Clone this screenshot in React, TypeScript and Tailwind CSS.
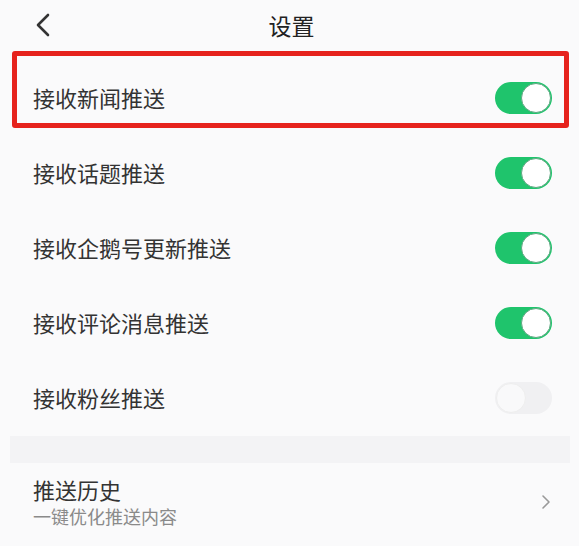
import React, { useState } from 'react';

const ITEMS = [
  { label: '接收新闻推送', on: true, highlight: true },
  { label: '接收话题推送', on: true },
  { label: '接收企鹅号更新推送', on: true },
  { label: '接收评论消息推送', on: true },
  { label: '接收粉丝推送', on: false },
];

function Toggle({ on, onClick }: { on: boolean; onClick: () => void }) {
  return (
    <button
      type="button"
      onClick={onClick}
      className={`relative w-[57px] h-[32px] rounded-full shrink-0 ${
        on ? 'bg-[#1fc46c]' : 'bg-[#f0f0f2]'
      }`}
    >
      <span
        className={`absolute top-[1px] w-[30px] h-[30px] rounded-full ${
          on ? 'right-[1px] bg-white border border-[#5fa781]' : 'left-[1px] bg-[#f9f9fa] border border-[#eeeeee]'
        }`}
      />
    </button>
  );
}

export default function App() {
  const [states, setStates] = useState(ITEMS.map((i) => i.on));

  return (
    <div className="w-[579px] h-[546px] overflow-hidden bg-[#fafafb] text-[#333] font-['Noto_Sans_CJK_SC','Noto_Sans',sans-serif]">
      {/* Header */}
      <div className="relative h-[50px] flex items-center justify-center">
        <svg className="absolute left-[34px] top-[13px]" width="18" height="24" viewBox="0 0 18 24" fill="none">
          <path d="M14 2 L4 12 L14 22" stroke="#333" strokeWidth="2.6" strokeLinecap="round" strokeLinejoin="round" />
        </svg>
        <span className="text-[23px] text-[#222] ml-[4px]">设置</span>
      </div>

      {/* Toggle rows */}
      <div className="pt-[10px]">
        {ITEMS.map((item, i) => (
          <div key={item.label} className="relative h-[75px] flex items-center justify-between pl-[33px] pr-[27px]">
            {item.highlight && (
              <div className="absolute left-[12px] right-[10px] top-[-9px] bottom-[7px] border-[5px] border-[#e6231d] rounded-[3px] pointer-events-none" />
            )}
            <span className="text-[22px]">{item.label}</span>
            <Toggle
              on={states[i]}
              onClick={() => setStates((prev) => prev.map((v, j) => (j === i ? !v : v)))}
            />
          </div>
        ))}
      </div>

      {/* Divider band */}
      <div className="ml-[10px] mr-[9px] h-[27px] mt-px bg-[#f3f3f5]" />

      {/* Push history */}
      <div className="flex items-center justify-between pl-[33px] pr-[28px] pt-[12px]">
        <div className="flex flex-col">
          <span className="text-[22px] leading-[28px] text-[#333]">推送历史</span>
          <span className="text-[18px] leading-[26px] text-[#8a8a8a]">一键优化推送内容</span>
        </div>
        <svg width="10" height="16" viewBox="0 0 10 16" fill="none">
          <path d="M2 2 L8 8 L2 14" stroke="#999" strokeWidth="1.6" strokeLinecap="round" strokeLinejoin="round" />
        </svg>
      </div>
    </div>
  );
}
